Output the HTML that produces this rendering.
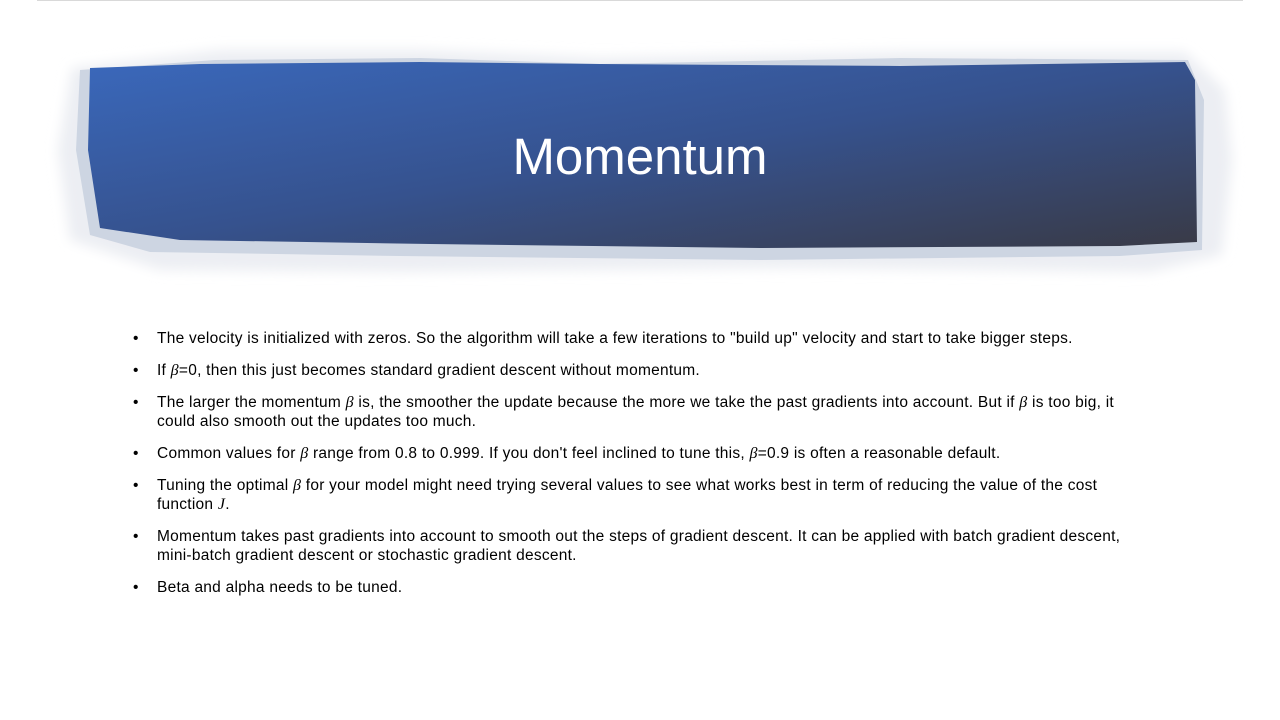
<!DOCTYPE html>
<html><head><meta charset="utf-8"><style>
html,body{margin:0;padding:0;background:#fff;}
body{width:1280px;height:720px;position:relative;overflow:hidden;font-family:"Liberation Sans",sans-serif;}
.topline{position:absolute;left:37px;top:0;width:1206px;height:1px;background:#d9d9d9;}
svg{position:absolute;left:0;top:0;}
.title{position:absolute;left:0;width:1280px;top:127px;text-align:center;color:#fff;font-size:51px;font-weight:300;}
ul{position:absolute;left:133px;top:329px;margin:0;padding:0;list-style:none;font-size:15.5px;color:#000;letter-spacing:0.25px;}
li{position:relative;padding-left:24px;line-height:19px;margin-bottom:13px;white-space:nowrap;}
li::before{content:"•";position:absolute;left:0;top:0;}
i{font-family:"Liberation Serif",serif;font-size:16px;}
</style></head><body>
<div class="topline"></div>
<svg width="1280" height="300" viewBox="0 0 1280 300">
<defs>
<linearGradient id="g" x1="0" y1="0" x2="1" y2="1" gradientUnits="objectBoundingBox">
<stop offset="0" stop-color="#3a68bb"/>
<stop offset="0.5" stop-color="#36528e"/>
<stop offset="1" stop-color="#393a46"/>
</linearGradient>
<filter id="b"><feGaussianBlur stdDeviation="6"/></filter>
</defs>
<path d="M72 68 L220 50 L420 50 L600 58 L900 52 L1185 52 L1225 90 L1232 160 L1222 255 L1150 272 L800 268 L400 272 L160 270 L70 240 L58 150 Z" fill="#eceef3" filter="url(#b)"/>
<path d="M80 70 L215 60 L420 58 L600 64 L900 58 L1188 60 L1204 100 L1202 250 L1120 256 L760 260 L400 256 L150 252 L90 235 L76 150 Z" fill="#cdd5e2"/>
<path d="M90 68 L200 64 L420 62 L600 64 L900 66 L1185 62 L1195 80 L1197 242 L1120 246 L760 248 L430 244 L180 240 L100 228 L88 150 Z" fill="url(#g)"/>
</svg>
<div class="title">Momentum</div>
<ul>
<li>The velocity is initialized with zeros. So the algorithm will take a few iterations to "build up" velocity and start to take bigger steps.</li>
<li>If <i>β</i>=0, then this just becomes standard gradient descent without momentum.</li>
<li>The larger the momentum <i>β</i> is, the smoother the update because the more we take the past gradients into account. But if <i>β</i> is too big, it<br>could also smooth out the updates too much.</li>
<li>Common values for <i>β</i> range from 0.8 to 0.999. If you don't feel inclined to tune this, <i>β</i>=0.9 is often a reasonable default.</li>
<li>Tuning the optimal <i>β</i> for your model might need trying several values to see what works best in term of reducing the value of the cost<br>function <i>J</i>.</li>
<li>Momentum takes past gradients into account to smooth out the steps of gradient descent. It can be applied with batch gradient descent,<br>mini-batch gradient descent or stochastic gradient descent.</li>
<li>Beta and alpha needs to be tuned.</li>
</ul>
</body></html>
